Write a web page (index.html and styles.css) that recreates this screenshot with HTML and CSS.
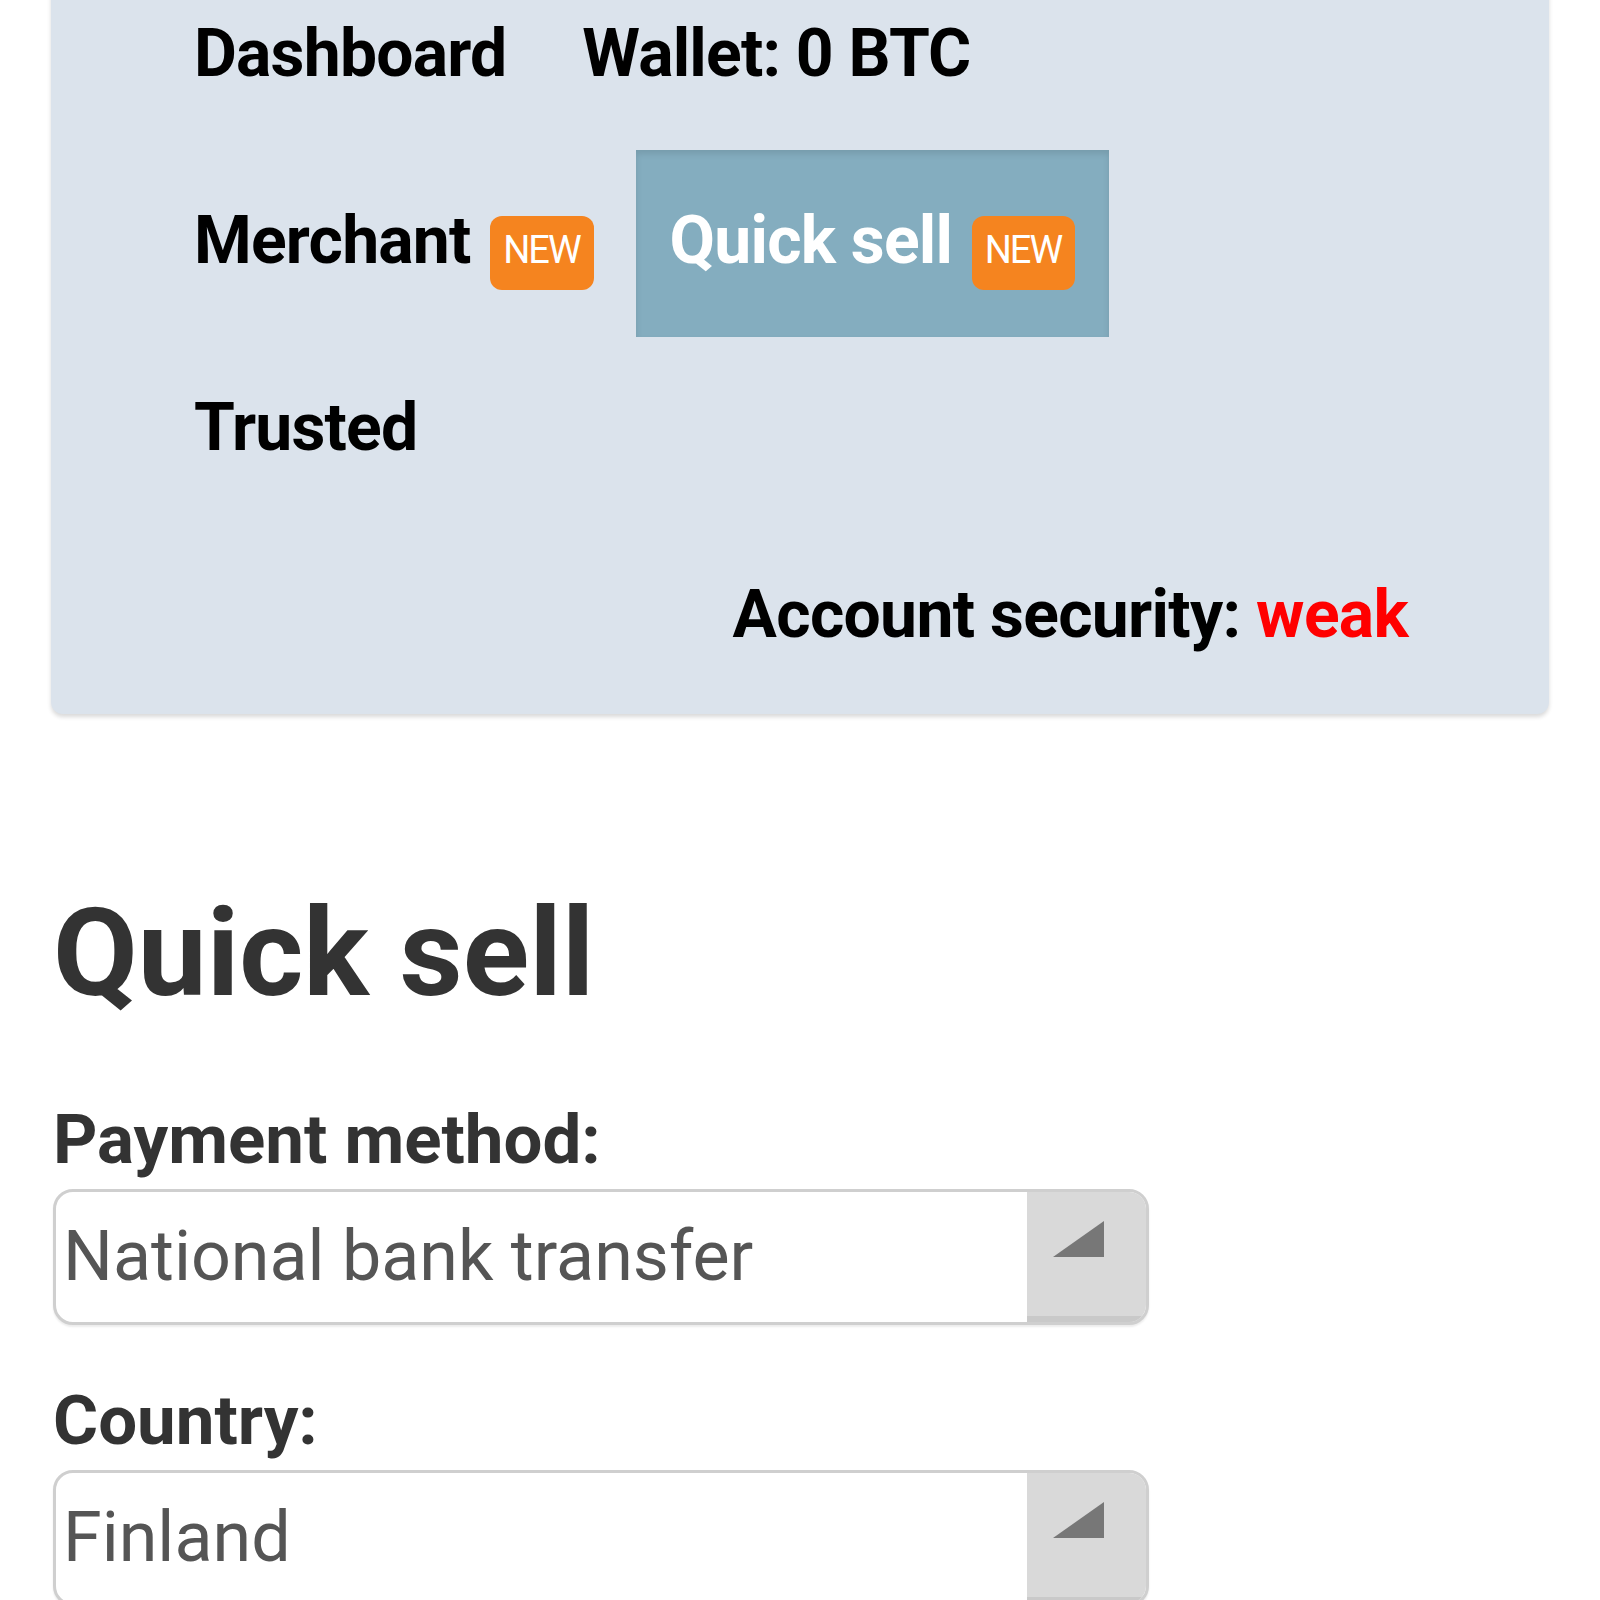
FILE: index.html
```html
<!DOCTYPE html>
<html lang="en">
<head>
    <meta charset="UTF-8">
    <meta name="viewport" content="width=device-width, initial-scale=1.0">
    <title>Quick sell</title>
    <link rel="stylesheet" href="styles.css">
</head>
<body>
    <div class="panel">
        <ul class="nav">
            <li><a href="#">Dashboard</a></li>
            <li><a href="#">Wallet: 0 BTC</a></li>
            <li><a href="#">Merchant <span class="badge">NEW</span></a></li>
            <li class="active"><a href="#">Quick sell <span class="badge">NEW</span></a></li>
            <li><a href="#">Trusted</a></li>
        </ul>
        <p class="security">Account security: <span class="weak">weak</span></p>
    </div>

    <div class="content">
        <h1>Quick sell</h1>

        <div class="field">
            <label>Payment method:</label>
            <div class="select">
                <span class="value">National bank transfer</span>
                <span class="arrow"><svg width="51" height="36" viewBox="0 0 51 36"><polygon points="0,36 51,36 51,0" fill="#777"/></svg></span>
            </div>
        </div>

        <div class="field">
            <label>Country:</label>
            <div class="select">
                <span class="value">Finland</span>
                <span class="arrow"><svg width="51" height="36" viewBox="0 0 51 36"><polygon points="0,36 51,36 51,0" fill="#777"/></svg></span>
            </div>
        </div>
    </div>
</body>
</html>
```

FILE: styles.css
```css
body { margin: 0; background: #fff; font-family: Roboto, "Liberation Sans", sans-serif; }

.panel { margin: -37px 51px 0; background: #dbe3ec; border-radius: 0 0 12px 12px; box-shadow: 0 3px 4px rgba(0, 0, 0, 0.15); padding-bottom: 9px; }
.nav { display: flex; flex-wrap: wrap; column-gap: 8px; list-style: none; margin: 0; padding: 0 300px 0 109px; }
.nav a { display: block; padding: 0 34px 6px; line-height: 181px; font-size: 66px; font-weight: bold; letter-spacing: -0.8px; color: #000; text-decoration: none; }
.nav .active a { background: #84adbf; color: #fff; box-shadow: inset 0 4px 6px rgba(0, 0, 0, 0.1); }
.badge { display: inline-block; margin-left: 4px; padding: 15px 14px 21px 13px; line-height: 38px; font-size: 38px; font-weight: normal; letter-spacing: -2px; color: #fff; background: #f5841f; border-radius: 12px; }

.security { margin: 0; padding-right: 141px; text-align: right; line-height: 181px; font-size: 66px; font-weight: bold; letter-spacing: -0.7px; color: #000; }
.weak { color: #ff0000; }

.content { margin: 0 51px; padding: 0 2px; }
h1 { margin: 166px 0 75px; font-size: 123px; line-height: 146px; color: #333; }
.field { margin-bottom: 57px; }
label { display: block; margin-bottom: 10px; font-size: 69px; line-height: 78px; font-weight: bold; color: #333; }
.select { display: flex; width: 1090px; height: 130px; border: 3px solid #cfcfcf; border-radius: 20px; overflow: hidden; background: #fff; box-shadow: 0 2px 2px rgba(0, 0, 0, 0.08); }
.value { flex: 1; padding-left: 7px; font-size: 70px; line-height: 128px; color: #555; }
.arrow { display: flex; justify-content: flex-end; align-items: flex-start; width: 77px; padding: 29px 42px 0 0; background: #d9d9d9; box-shadow: inset 0 -6px 0 #c9c9c9; }
```
